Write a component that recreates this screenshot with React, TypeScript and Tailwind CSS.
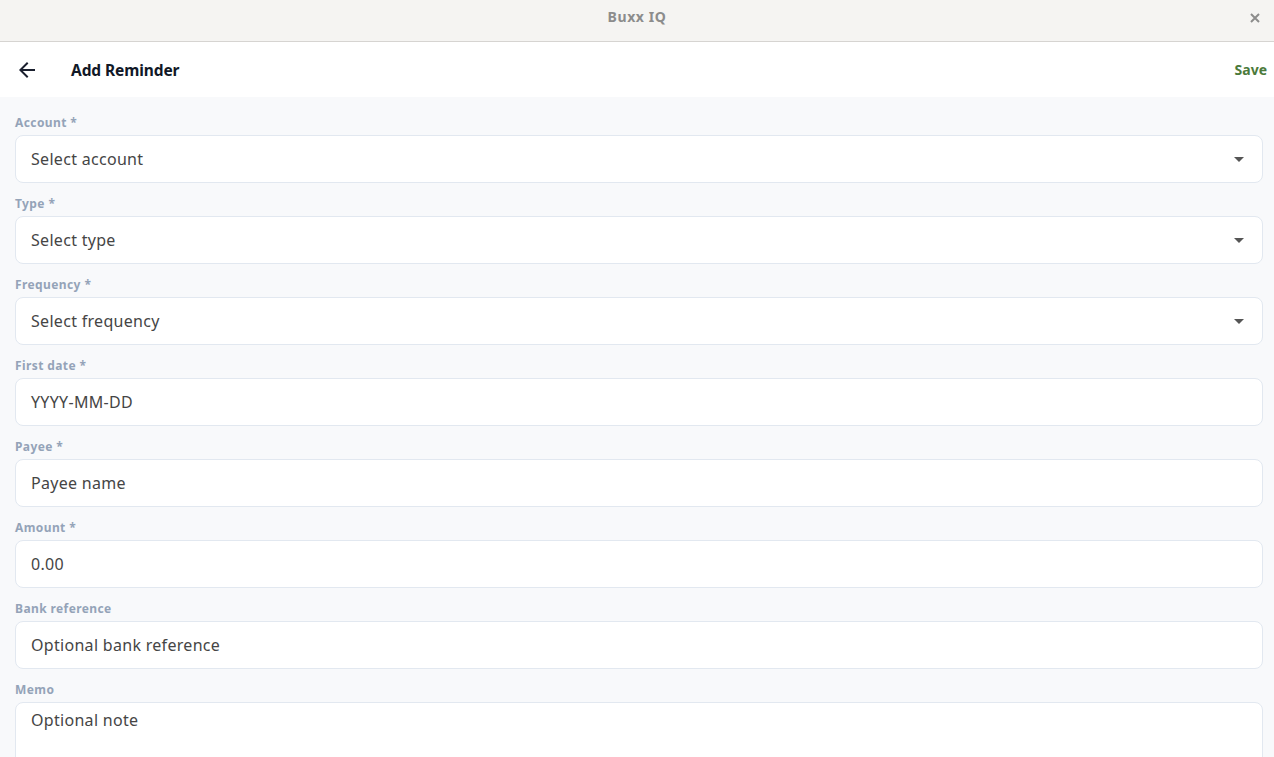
import React from "react";

const font = { fontFamily: '"Noto Sans", "Open Sans", sans-serif' };

function Label({ children }: { children: React.ReactNode }) {
  return (
    <div className="h-[16px] leading-[16px] pt-[1px] text-[12px] tracking-[0.4px] font-bold text-[#94a3b8] mb-[5px]">
      {children}
    </div>
  );
}

function Caret() {
  return (
    <svg width="24" height="24" viewBox="0 0 24 24" className="text-[#555]">
      <path d="M7 10l5 5 5-5z" fill="currentColor" />
    </svg>
  );
}

function Field({ label, value, select }: { label: string; value: string; select?: boolean }) {
  return (
    <div className="mb-[12px]">
      <Label>{label}</Label>
      <div className="h-[48px] bg-white border border-[#e2e8f0] rounded-[8px] flex items-center justify-between pl-[15px] pr-[11px]">
        <span className="text-[16px] tracking-[0.3px] text-[#454545]">{value}</span>
        {select && <Caret />}
      </div>
    </div>
  );
}

export default function App() {
  return (
    <div className="w-[1274px] h-[757px] overflow-hidden bg-[#f8f9fb] flex flex-col" style={font}>
      <div className="h-[42px] shrink-0 bg-[#f5f4f2] border-b border-[#d6d4d1] relative">
        <div className="text-center pt-[7px] leading-[20px] text-[14px] font-bold tracking-[0.6px] text-[#8c8c8c]">Buxx IQ</div>
        <svg className="absolute right-[14px] top-[13px]" width="10" height="10" viewBox="0 0 10 10">
          <path d="M1 1L9 9M9 1L1 9" stroke="#8c8c8c" strokeWidth="2" />
        </svg>
      </div>
      <div className="h-[55px] shrink-0 bg-white flex items-center pl-[15px] pr-[7px]">
        <svg width="24" height="24" viewBox="0 0 24 24" className="text-[#1a1f2e]">
          <path d="M20 11H7.83l5.59-5.59L12 4l-8 8 8 8 1.41-1.41L7.83 13H20v-2z" fill="currentColor" />
        </svg>
        <span className="ml-[32px] pt-[2px] text-[15.5px] font-bold tracking-[-0.1px] text-[#111827]">Add Reminder</span>
        <span className="ml-auto text-[14px] font-bold text-[#4b7a3b]">Save</span>
      </div>
      <div className="px-[15px] pt-[17px] pr-[11px]">
        <Field label="Account *" value="Select account" select />
        <Field label="Type *" value="Select type" select />
        <Field label="Frequency *" value="Select frequency" select />
        <Field label="First date *" value="YYYY-MM-DD" />
        <Field label="Payee *" value="Payee name" />
        <Field label="Amount *" value="0.00" />
        <Field label="Bank reference" value="Optional bank reference" />
        <div>
          <Label>Memo</Label>
          <div className="h-[110px] bg-white border border-[#e2e8f0] rounded-[8px] pl-[15px] pt-[5px]">
            <span className="text-[16px] tracking-[0.3px] text-[#454545]">Optional note</span>
          </div>
        </div>
      </div>
    </div>
  );
}
